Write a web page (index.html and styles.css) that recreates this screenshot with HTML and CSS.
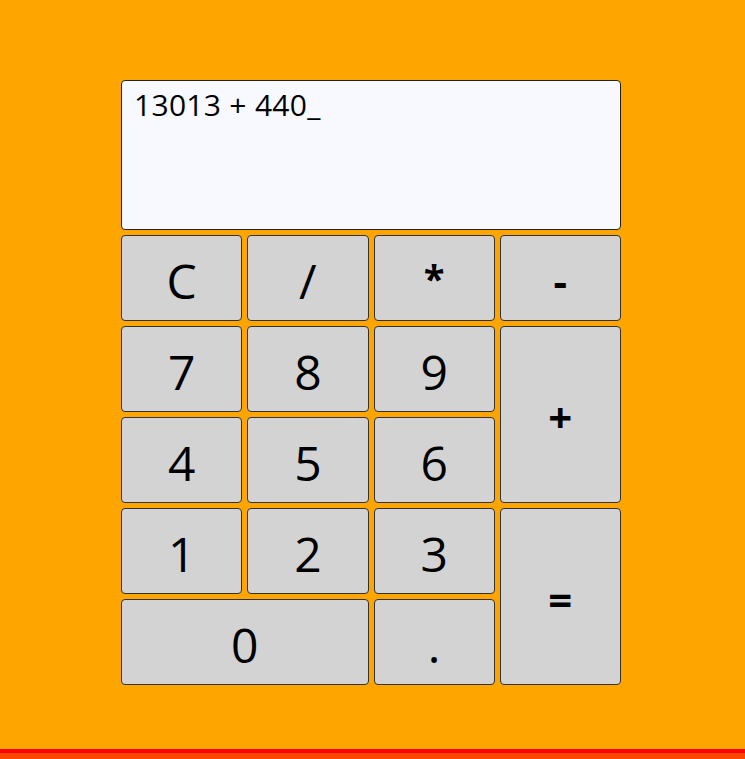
FILE: index.html
```html
<!DOCTYPE html>
<html>
<head>
<meta charset="utf-8">
<link rel="stylesheet" href="styles.css">
</head>
<body>
<div class="page">
  <div class="calc">
    <div class="display">13013 + 440_</div>
    <div class="keys">
      <div class="key">C</div>
      <div class="key">/</div>
      <div class="key op star">*</div>
      <div class="key op minus">-</div>
      <div class="key">7</div>
      <div class="key">8</div>
      <div class="key">9</div>
      <div class="key tall op">+</div>
      <div class="key">4</div>
      <div class="key">5</div>
      <div class="key">6</div>
      <div class="key">1</div>
      <div class="key">2</div>
      <div class="key">3</div>
      <div class="key tall op">=</div>
      <div class="key wide">0</div>
      <div class="key">.</div>
    </div>
  </div>
</div>
<div class="bar"></div>
</body>
</html>
```
FILE: styles.css
```css
html, body {
  margin: 0;
  padding: 0;
  background: #ffa500;
  font-family: "Open Sans", "Noto Sans", sans-serif;
}
.page {
  height: 749px;
  display: flex;
  padding: 80px 0 0 121px;
  box-sizing: border-box;
}
.calc {
  width: 500px;
  display: flex;
  flex-direction: column;
  gap: 5px;
}
.display {
  height: 150px;
  box-sizing: border-box;
  background: #f8f8ff;
  border: 1px solid #222;
  border-radius: 4px;
  padding: 4px 12px;
  font-size: 30px;
  line-height: 40px;
  letter-spacing: 0.3px;
  color: #000;
}
.keys {
  display: grid;
  grid-template-columns: repeat(4, 1fr);
  grid-auto-rows: 86px;
  gap: 5px;
}
.key {
  background: #d3d3d3;
  border: 1px solid #333;
  border-radius: 4px;
  display: flex;
  align-items: center;
  justify-content: center;
  font-size: 48px;
  color: #000;
  padding-top: 4px;
  box-sizing: border-box;
}
.op {
  font-weight: 700;
  font-size: 42px;
}
.star {
  font-size: 38px;
  padding-top: 0;
}
.tall { grid-row: span 2; }
.wide { grid-column: span 2; }
.bar {
  height: 4px;
  background: #ff0000;
  border-bottom: 6px solid #ff4500;
}
```
